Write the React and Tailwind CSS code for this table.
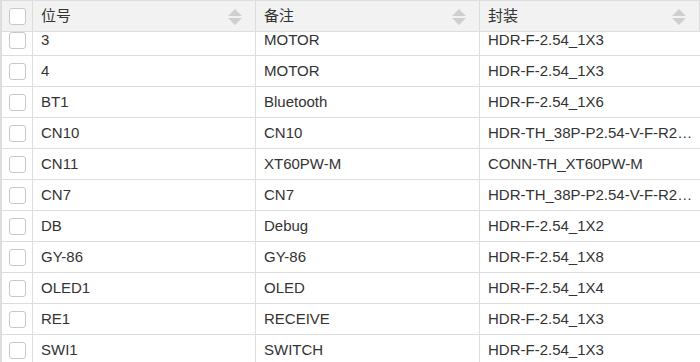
import React from "react";

const rows = [
  ["3", "MOTOR", "HDR-F-2.54_1X3"],
  ["4", "MOTOR", "HDR-F-2.54_1X3"],
  ["BT1", "Bluetooth", "HDR-F-2.54_1X6"],
  ["CN10", "CN10", "HDR-TH_38P-P2.54-V-F-R2…"],
  ["CN11", "XT60PW-M", "CONN-TH_XT60PW-M"],
  ["CN7", "CN7", "HDR-TH_38P-P2.54-V-F-R2…"],
  ["DB", "Debug", "HDR-F-2.54_1X2"],
  ["GY-86", "GY-86", "HDR-F-2.54_1X8"],
  ["OLED1", "OLED", "HDR-F-2.54_1X4"],
  ["RE1", "RECEIVE", "HDR-F-2.54_1X3"],
  ["SWI1", "SWITCH", "HDR-F-2.54_1X3"],
];

const font = { fontFamily: '"Liberation Sans", Arial, "Noto Sans CJK SC", sans-serif' };

function Checkbox() {
  return <div className="w-[17px] h-[17px] rounded-[3px] border border-[#c8c8c8] bg-white" />;
}

function SortIcon() {
  return (
    <svg width="14" height="17" viewBox="0 0 14 17" className="absolute right-[13px] top-[8px]">
      <polygon points="7,0 14,7 0,7" fill="#cfcfcf" />
      <polygon points="0,9 14,9 7,16" fill="#cfcfcf" />
    </svg>
  );
}

function HeadCell({ children, w }) {
  return (
    <div className={`relative ${w} h-full border-r border-[#dddddd] flex items-center px-2 text-[15px] text-[#333]`}>
      {children}
      <SortIcon />
    </div>
  );
}

export default function App() {
  return (
    <div className="w-[700px] h-[362px] overflow-hidden bg-white border-l-2 border-t border-[#dddddd]" style={font}>
      <div className="flex h-[31px] bg-[#f2f2f2] border-b border-[#dddddd]">
        <div className="w-[31px] h-full border-r border-[#dddddd] flex items-center justify-center pl-[1px]">
          <Checkbox />
        </div>
        <HeadCell w="w-[223px]">位号</HeadCell>
        <HeadCell w="w-[224px]">备注</HeadCell>
        <HeadCell w="flex-1">封装</HeadCell>
      </div>
      <div className="h-[330px] overflow-hidden">
        <div className="-mt-[7px]">
          {rows.map((r, i) => (
            <div key={i} className="flex h-[31px] border-b border-[#dddddd] text-[15px] text-[#333]">
              <div className="w-[31px] h-full border-r border-[#dddddd] flex items-center justify-center pl-[1px]">
                <Checkbox />
              </div>
              <div className="w-[223px] h-full border-r border-[#dddddd] flex items-center px-2 whitespace-nowrap">{r[0]}</div>
              <div className="w-[224px] h-full border-r border-[#dddddd] flex items-center px-2 whitespace-nowrap">{r[1]}</div>
              <div className="flex-1 min-w-0 h-full flex items-center pl-2 whitespace-nowrap">{r[2]}</div>
            </div>
          ))}
        </div>
      </div>
    </div>
  );
}
